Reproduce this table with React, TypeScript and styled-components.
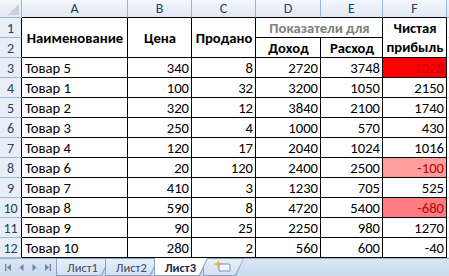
import React from 'react';
import styled, { createGlobalStyle, css } from 'styled-components';

const Global = createGlobalStyle`
  html, body { margin: 0; padding: 0; background: #fff; }
  body { font-family: Carlito, Lato, "Liberation Sans", sans-serif; }
  * { box-sizing: border-box; }
`;

const Window = styled.div`
  width: 449px;
  height: 276px;
  display: flex;
  flex-direction: column;
  overflow: hidden;
  background: #fff;
`;

const Grid = styled.div`
  display: grid;
  grid-template-columns: 22px 106px 64px 64px 65px 62px 64px 2px;
  grid-template-rows: 18px repeat(12, 20px);
  font-size: 11pt;
  color: #000;
`;

const headBg = css`
  background: linear-gradient(#f3f6fb, #e1e9f4);
  color: #27415f;
`;

const Corner = styled.div`
  ${headBg};
  border-right: 1px solid #9eb6ce;
  border-bottom: 1px solid #9eb6ce;
  display: flex;
  align-items: flex-end;
  justify-content: flex-end;
  padding: 0 2px 2px 0;
`;

const CornerTri = styled.div`
  width: 0;
  height: 0;
  border-left: 11px solid transparent;
  border-bottom: 11px solid #c8d2de;
`;

const ColHead = styled.div<{ $edge?: boolean }>`
  ${headBg};
  border-right: 1px solid #9eb6ce;
  border-bottom: 1px solid #000;
  display: flex;
  align-items: center;
  justify-content: center;
  font-size: 14px;
`;

const RowHead = styled.div`
  background: #e9eff8;
  color: #27415f;
  border-right: 1px solid #000;
  border-bottom: 1px solid #9eb6ce;
  display: flex;
  align-items: center;
  justify-content: center;
  font-size: 14px;
  padding-top: 1px;
`;

type Align = 'left' | 'right' | 'center';

const Cell = styled.div<{
  $align?: Align;
  $bold?: boolean;
  $fill?: string;
  $color?: string;
  $rows?: number;
  $cols?: number;
}>`
  border-right: 1px solid #000;
  border-bottom: 1px solid #000;
  display: flex;
  flex-direction: column;
  align-items: ${(p) =>
    p.$align === 'left' ? 'flex-start' : p.$align === 'center' ? 'center' : 'flex-end'};
  justify-content: center;
  padding: 1px 2px 0 3px;
  font-weight: ${(p) => (p.$bold ? 700 : 400)};
  background: ${(p) => p.$fill || '#fff'};
  color: ${(p) => p.$color || '#000'};
  white-space: nowrap;
  line-height: 19px;
  ${(p) => p.$rows && css`grid-row: span ${p.$rows};`}
  ${(p) => p.$cols && css`grid-column: span ${p.$cols};`}
`;

const Filler = styled.div`
  border-bottom: 1px solid #d0d7e5;
  background: #fff;
`;

const HeadFiller = styled.div`
  ${headBg};
  border-bottom: 1px solid #9eb6ce;
`;

const TabBar = styled.div`
  height: 18px;
  display: flex;
  align-items: stretch;
  background: linear-gradient(#dbe6f4, #c9daee);
  border-top: 1px solid #9fb5d2;
  font-size: 12.5px;
`;

const Nav = styled.div`
  width: 56px;
  display: flex;
  align-items: center;
  gap: 3px;
  padding-left: 3px;
`;

const NavBtn = styled.span`
  width: 10px;
  height: 10px;
  display: flex;
  align-items: center;
  justify-content: center;
`;

const Tab = styled.div<{ $active?: boolean }>`
  position: relative;
  display: flex;
  align-items: center;
  padding: 0 12px 0 11px;
  margin-right: -5px;
  color: ${(p) => (p.$active ? '#1b2a44' : '#3d4b63')};
  font-weight: ${(p) => (p.$active ? 700 : 400)};
  z-index: ${(p) => (p.$active ? 2 : 1)};
  &::before {
    content: '';
    position: absolute;
    inset: -1px 0 0 0;
    background: #8aa2c2;
    clip-path: polygon(0 0, 100% 0, calc(100% - 8px) 100%, 0 100%);
  }
  &::after {
    content: '';
    position: absolute;
    inset: ${(p) => (p.$active ? '-1px' : '0')} 1px 1px 1px;
    background: ${(p) => (p.$active ? '#fff' : 'linear-gradient(#e6eef8, #d4e1f1)')};
    clip-path: polygon(0 0, 100% 0, calc(100% - 8px) 100%, 0 100%);
  }
`;

const TabLabel = styled.span`
  position: relative;
  z-index: 1;
`;

const NavIcon: React.FC<{ dir: 'first' | 'prev' | 'next' | 'last' }> = ({ dir }) => {
  const c = '#6f86a6';
  return (
    <svg width="9" height="9" viewBox="0 0 9 9">
      {dir === 'first' && (
        <>
          <rect x="1" y="1" width="1.4" height="7" fill={c} />
          <path d="M7 1 L3 4.5 L7 8 Z" fill={c} />
        </>
      )}
      {dir === 'prev' && <path d="M6.5 1 L2.5 4.5 L6.5 8 Z" fill={c} />}
      {dir === 'next' && <path d="M2.5 1 L6.5 4.5 L2.5 8 Z" fill={c} />}
      {dir === 'last' && (
        <>
          <path d="M2 1 L6 4.5 L2 8 Z" fill={c} />
          <rect x="6.6" y="1" width="1.4" height="7" fill={c} />
        </>
      )}
    </svg>
  );
};

const InsertIcon = () => (
  <svg width="18" height="13" viewBox="0 0 18 13">
    <path d="M5 4 H15 L16 5 V11 H5 Z" fill="#f4f7fb" stroke="#7d93b2" strokeWidth="1" />
    <path d="M4 1 L5 3.5 L7.5 4 L5 4.6 L4 7 L3 4.6 L0.5 4 L3 3.5 Z" fill="#f2c230" stroke="#d59a10" strokeWidth="0.5" />
  </svg>
);

type Row = { name: string; price: number; sold: number; inc: number; exp: number; net: number; fill?: string; color?: string };

const rows: Row[] = [
  { name: 'Товар 5', price: 340, sold: 8, inc: 2720, exp: 3748, net: -1028, fill: '#ff0000', color: '#d20000' },
  { name: 'Товар 1', price: 100, sold: 32, inc: 3200, exp: 1050, net: 2150 },
  { name: 'Товар 2', price: 320, sold: 12, inc: 3840, exp: 2100, net: 1740 },
  { name: 'Товар 3', price: 250, sold: 4, inc: 1000, exp: 570, net: 430 },
  { name: 'Товар 4', price: 120, sold: 17, inc: 2040, exp: 1024, net: 1016 },
  { name: 'Товар 6', price: 20, sold: 120, inc: 2400, exp: 2500, net: -100, fill: '#ff9c9c', color: '#c00000' },
  { name: 'Товар 7', price: 410, sold: 3, inc: 1230, exp: 705, net: 525 },
  { name: 'Товар 8', price: 590, sold: 8, inc: 4720, exp: 5400, net: -680, fill: '#ff7c80', color: '#c00000' },
  { name: 'Товар 9', price: 90, sold: 25, inc: 2250, exp: 980, net: 1270 },
  { name: 'Товар 10', price: 280, sold: 2, inc: 560, exp: 600, net: -40 },
];

export default function App() {
  return (
    <Window>
      <Global />
      <Grid>
        <Corner>
          <CornerTri />
        </Corner>
        {['A', 'B', 'C', 'D', 'E', 'F'].map((l) => (
          <ColHead key={l}>{l}</ColHead>
        ))}
        <HeadFiller />

        <RowHead>1</RowHead>
        <Cell $rows={2} $align="center" $bold>Наименование</Cell>
        <Cell $rows={2} $align="center" $bold>Цена</Cell>
        <Cell $rows={2} $align="center" $bold>Продано</Cell>
        <Cell $cols={2} $align="center" $bold $color="#808080">Показатели для</Cell>
        <Cell $rows={2} $align="center" $bold>
          <span>Чистая</span>
          <span>прибыль</span>
        </Cell>
        <Filler />

        <RowHead>2</RowHead>
        <Cell $align="center" $bold>Доход</Cell>
        <Cell $align="center" $bold>Расход</Cell>
        <Filler />

        {rows.map((r, i) => (
          <React.Fragment key={r.name}>
            <RowHead>{i + 3}</RowHead>
            <Cell $align="left">{r.name}</Cell>
            <Cell>{r.price}</Cell>
            <Cell>{r.sold}</Cell>
            <Cell>{r.inc}</Cell>
            <Cell>{r.exp}</Cell>
            <Cell $fill={r.fill} $color={r.color}>{r.net}</Cell>
            <Filler />
          </React.Fragment>
        ))}
      </Grid>
      <TabBar>
        <Nav>
          <NavBtn><NavIcon dir="first" /></NavBtn>
          <NavBtn><NavIcon dir="prev" /></NavBtn>
          <NavBtn><NavIcon dir="next" /></NavBtn>
          <NavBtn><NavIcon dir="last" /></NavBtn>
        </Nav>
        <Tab><TabLabel>Лист1</TabLabel></Tab>
        <Tab><TabLabel>Лист2</TabLabel></Tab>
        <Tab $active><TabLabel>Лист3</TabLabel></Tab>
        <Tab><TabLabel><InsertIcon /></TabLabel></Tab>
      </TabBar>
    </Window>
  );
}
